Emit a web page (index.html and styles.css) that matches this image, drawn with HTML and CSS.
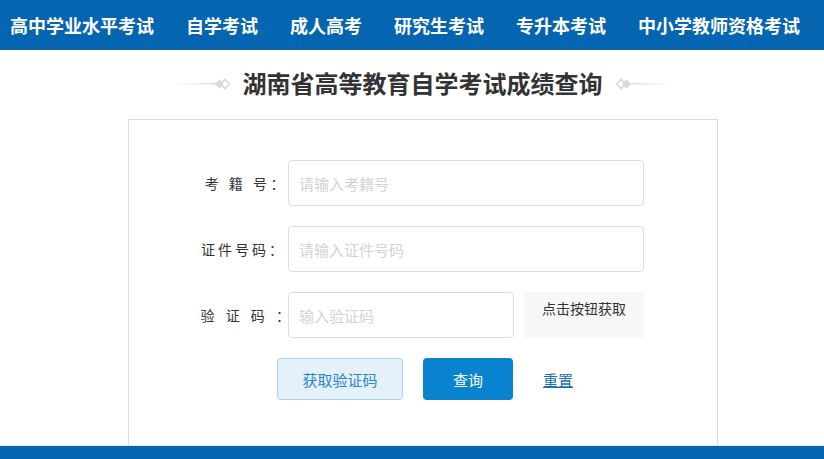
FILE: index.html
```html
<!DOCTYPE html>
<html lang="zh-CN">
<head>
<meta charset="utf-8">
<title>湖南省高等教育自学考试成绩查询</title>
<link rel="stylesheet" href="styles.css">
</head>
<body>
<nav class="nav">
  <a class="nav-item" href="#">高中学业水平考试</a>
  <a class="nav-item" href="#">自学考试</a>
  <a class="nav-item" href="#">成人高考</a>
  <a class="nav-item" href="#">研究生考试</a>
  <a class="nav-item" href="#">专升本考试</a>
  <a class="nav-item" href="#">中小学教师资格考试</a>
</nav>
<div class="title-row">
  <svg class="deco" width="60" height="14" viewBox="0 0 60 14">
    <defs>
      <linearGradient id="gl" x1="0" x2="1" y1="0" y2="0">
        <stop offset="0" stop-color="#e6e6e6" stop-opacity="0"/>
        <stop offset="1" stop-color="#d6d6d6"/>
      </linearGradient>
    </defs>
    <rect x="0" y="6" width="46" height="1.5" fill="url(#gl)"/>
    <path d="M53 2.5 L57.5 7 L53 11.5 L48.5 7 Z" fill="none" stroke="#d8d8d8" stroke-width="1.6"/>
    <path d="M47.5 2.5 L52 7 L47.5 11.5 L43 7 Z" fill="#d8d8d8"/>
  </svg>
  <h1 class="title">湖南省高等教育自学考试成绩查询</h1>
  <svg class="deco" width="60" height="14" viewBox="0 0 60 14">
    <defs>
      <linearGradient id="gr" x1="0" x2="1" y1="0" y2="0">
        <stop offset="0" stop-color="#d6d6d6"/>
        <stop offset="1" stop-color="#e6e6e6" stop-opacity="0"/>
      </linearGradient>
    </defs>
    <rect x="14" y="6" width="46" height="1.5" fill="url(#gr)"/>
    <path d="M7 2.5 L11.5 7 L7 11.5 L2.5 7 Z" fill="none" stroke="#d8d8d8" stroke-width="1.6"/>
    <path d="M12.5 2.5 L17 7 L12.5 11.5 L8 7 Z" fill="#d8d8d8"/>
  </svg>
</div>
<main class="card">
  <div class="row">
    <label class="label label-wide">考 籍 号：</label>
    <input class="input" type="text" placeholder="请输入考籍号">
  </div>
  <div class="row">
    <label class="label">证件号码：</label>
    <input class="input" type="text" placeholder="请输入证件号码">
  </div>
  <div class="row">
    <label class="label label-wider">验 证 码 ：</label>
    <input class="input input-short" type="text" placeholder="输入验证码">
    <button class="captcha" type="button">点击按钮获取</button>
  </div>
  <div class="actions">
    <button class="btn btn-light" type="button">获取验证码</button>
    <button class="btn btn-primary" type="button">查询</button>
    <a class="reset" href="#">重置</a>
  </div>
</main>
<footer class="footer"></footer>
</body>
</html>
```
FILE: styles.css
```css
html, body {
  margin: 0;
  padding: 0;
  background: #fff;
  font-family: "Noto Sans CJK SC", "Noto Sans", sans-serif;
  color: #333;
  overflow: hidden;
}

.nav {
  display: flex;
  align-items: center;
  gap: 32px;
  height: 50px;
  padding-left: 10px;
  background: #0565b0;
}

.nav-item {
  color: #fff;
  font-size: 18px;
  font-weight: bold;
  text-decoration: none;
  line-height: 50px;
  white-space: nowrap;
}

.title-row {
  display: flex;
  align-items: center;
  justify-content: center;
  gap: 11px;
  height: 66px;
  padding-left: 21px;
}

.deco {
  display: block;
  margin-top: 2px;
}

.title {
  margin: 0;
  font-size: 24px;
  font-weight: bold;
  color: #333;
  line-height: 32px;
}

.card {
  box-sizing: border-box;
  width: 590px;
  margin: 3px 0 0 128px;
  border: 1px solid #dddddd;
  border-bottom: none;
  padding: 40px 0 45px 0;
  display: flex;
  flex-direction: column;
  gap: 20px;
}

.row {
  display: flex;
  align-items: center;
  height: 46px;
}

.label {
  box-sizing: border-box;
  width: 159px;
  padding-right: 2px;
  text-align: right;
  font-size: 14px;
  letter-spacing: 3px;
  color: #333;
  white-space: pre;
}

.label-wide {
  letter-spacing: 3.5px;
  padding-right: 0;
}

.label-wider {
  letter-spacing: 4px;
  padding-right: 0;
  margin-right: -6px;
  width: 165px;
}

.input {
  box-sizing: border-box;
  width: 356px;
  height: 46px;
  border: 1px solid #dddddd;
  border-radius: 4px;
  padding: 0 10px;
  font-family: inherit;
  font-size: 15px;
  color: #333;
  outline: none;
}

.input::placeholder {
  color: #d3d3d3;
}

.input-short {
  width: 226px;
}

.captcha {
  box-sizing: border-box;
  width: 120px;
  height: 46px;
  margin-left: 10px;
  border: none;
  border-radius: 3px;
  background: #f7f7f7;
  color: #333;
  font-family: inherit;
  font-size: 14px;
  line-height: 32px;
  padding: 0;
  align-self: flex-start;
  display: flex;
  justify-content: center;
  align-items: flex-start;
}

.actions {
  display: flex;
  align-items: center;
  gap: 20px;
  height: 42px;
  padding-left: 148px;
}

.btn {
  box-sizing: border-box;
  height: 42px;
  border-radius: 4px;
  font-family: inherit;
  font-size: 15px;
  cursor: pointer;
}

.btn-light {
  width: 126px;
  background: #e4f1fa;
  border: 1px solid #a9d4f1;
  color: #2a86c8;
}

.btn-primary {
  width: 90px;
  background: #0a84d0;
  border: none;
  color: #fff;
}

.reset {
  margin-left: 10px;
  font-size: 15px;
  color: #1a6fb0;
  text-decoration: underline;
}

.footer {
  height: 14px;
  background: #0565b0;
  border-top: 1px solid #dde6ef;
}
```
